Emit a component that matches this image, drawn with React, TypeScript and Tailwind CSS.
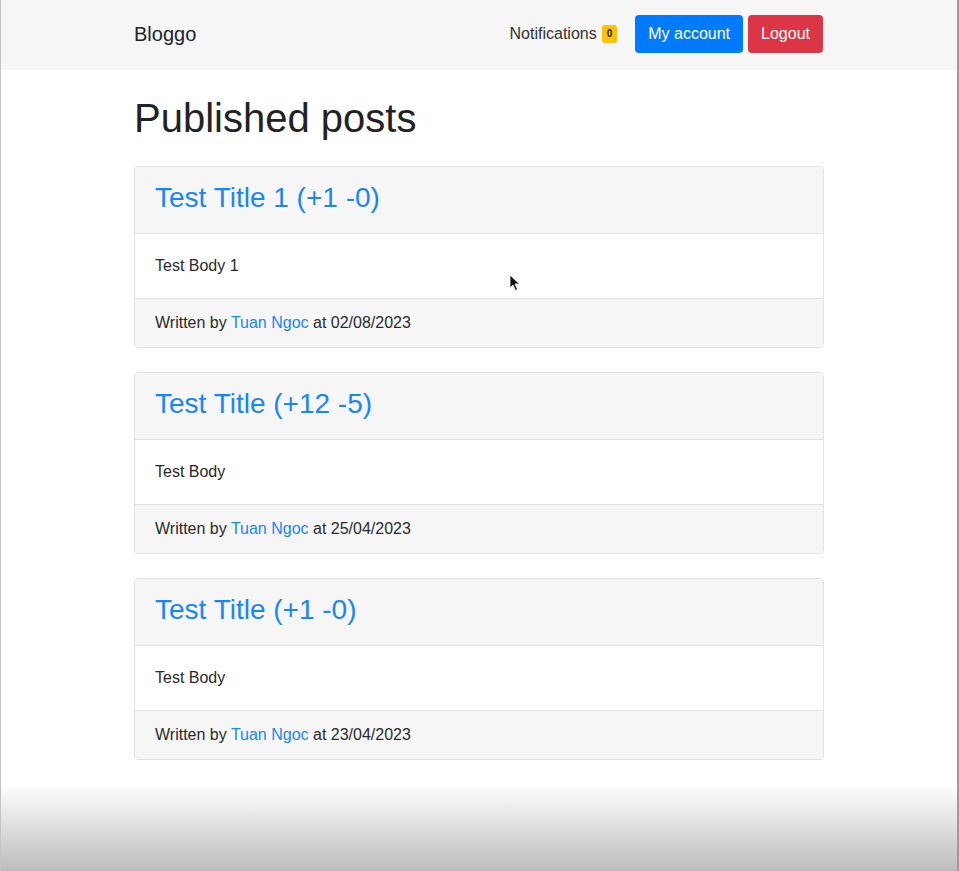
const posts = [
  { title: "Test Title 1 (+1 -0)", body: "Test Body 1", author: "Tuan Ngoc", date: "02/08/2023" },
  { title: "Test Title (+12 -5)", body: "Test Body", author: "Tuan Ngoc", date: "25/04/2023" },
  { title: "Test Title (+1 -0)", body: "Test Body", author: "Tuan Ngoc", date: "23/04/2023" },
];

const Navbar = () => {
  return (
    <nav className="bg-[#f5f6f5] h-[70px] flex items-center pb-[2px]">
      <div className="w-[720px] mx-auto pl-[15px] pr-[16px] flex items-center">
        <a className="text-[20px] leading-[30px] text-[#212529]">Bloggo</a>
        <div className="ml-auto flex items-center">
          <span className="text-[16px] text-[#333] mr-[18px] flex items-center">
            Notifications
            <span className="ml-[5px] bg-[#ffc107] text-[#212529] text-[10px] font-bold leading-none px-[5px] py-[4px] rounded-[3px]">
              0
            </span>
          </span>
          <button className="bg-[#007bff] text-white text-[16px] leading-[24px] px-[13px] py-[7px] rounded-[4px]">
            My account
          </button>
          <button className="ml-[5px] bg-[#dc3545] text-white text-[16px] leading-[24px] px-[13px] py-[7px] rounded-[4px]">
            Logout
          </button>
        </div>
      </div>
    </nav>
  );
};

const PostCard = ({ post }: { post: (typeof posts)[number] }) => {
  return (
    <div className="border border-[#e2e2e2] rounded-[4px] mb-[24px] overflow-hidden">
      <div className="bg-[#f6f6f6] border-b border-[#e2e2e2] px-[20px] pt-[13.5px] pb-[18.5px]">
        <h3 className="text-[28px] leading-[34px] text-[#1a85f5]">{post.title}</h3>
      </div>
      <div className="bg-white px-[20px] py-[20px] text-[16px] leading-[24px] text-[#2a2a2a]">
        {post.body}
      </div>
      <div className="bg-[#f6f6f6] border-t border-[#e2e2e2] px-[20px] py-[12px] text-[16px] leading-[24px] text-[#2a2a2a]">
        Written by <a className="text-[#1a85f5]">{post.author}</a> at {post.date}
      </div>
    </div>
  );
}

export default function App() {
  return (
    <div
      className="relative min-h-[871px] flex flex-col bg-white border-l border-[#c4c4c4] border-r-2 border-r-[#9c9c9c]"
      style={{ fontFamily: '"Liberation Sans", Arial, sans-serif' }}
    >
      <Navbar />
      <main className="w-[720px] mx-auto px-[15px]">
        <h1 className="text-[40px] leading-[48px] text-[#222] mt-[24px] mb-[24px]">Published posts</h1>
        {posts.map((post, i) => (
          <PostCard key={i} post={post} />
        ))}
      </main>
      <div className="flex-1" />
      <div className="h-[90px] bg-gradient-to-b from-white to-[#bbbbbb]" />
      {/* mouse pointer */}
      <svg className="absolute left-[508px] top-[274px]" width="12" height="18" viewBox="0 0 12 18">
        <path d="M1 1 L1 14 L4 11 L6.5 16.5 L8.5 15.5 L6 10 L10.5 10 Z" fill="#111" stroke="#fff" strokeWidth="0.8" />
      </svg>
    </div>
  );
}
